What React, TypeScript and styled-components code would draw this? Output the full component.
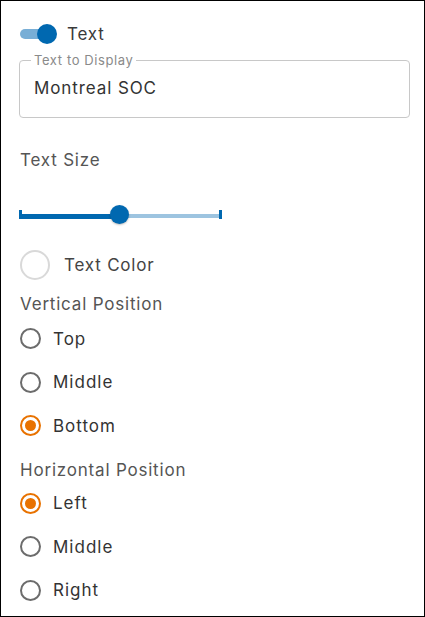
import styled, { createGlobalStyle } from "styled-components";

const GlobalStyle = createGlobalStyle`
  html, body {
    margin: 0;
    padding: 0;
    background: #fff;
  }
  body {
    font-family: Inter, "Open Sans", "Liberation Sans", sans-serif;
    letter-spacing: 0.8px;
  }
`;

const Panel = styled.div`
  box-sizing: border-box;
  width: 425px;
  height: 617px;
  border: 1px solid #000;
  padding: 0 14px 0 18px;
  display: flex;
  flex-direction: column;
  color: #333;
  overflow: hidden;
`;

const ToggleRow = styled.label`
  display: flex;
  align-items: center;
  gap: 11px;
  height: 20px;
  margin-top: 23px;
  margin-left: 1px;
  font-size: 17px;
  color: #3a3a3a;
`;

const ToggleTrack = styled.span`
  position: relative;
  display: inline-block;
  width: 36px;
  height: 10px;
  border-radius: 5px;
  background: #78aed6;
`;

const ToggleThumb = styled.span`
  position: absolute;
  top: -5px;
  right: -1px;
  width: 20px;
  height: 20px;
  border-radius: 50%;
  background: #0068b0;
`;

const Field = styled.fieldset`
  box-sizing: border-box;
  margin: 9px 0 0 0;
  padding: 0 14px;
  height: 65px;
  border: 1px solid #c8c8c8;
  border-radius: 4px;
  min-width: 0;
`;

const Legend = styled.legend`
  padding: 0 3px;
  margin-left: -3px;
  font-size: 13px;
  line-height: 14px;
  letter-spacing: 0.6px;
  color: #8a8a8a;
`;

const ValueInput = styled.input`
  box-sizing: border-box;
  width: 100%;
  height: 42px;
  border: none;
  outline: none;
  padding: 0;
  margin: 0;
  font-family: inherit;
  letter-spacing: 0.9px;
  font-size: 17px;
  color: #333;
  background: transparent;
`;

const SectionLabel = styled.div<{ $top: number }>`
  margin-top: ${({ $top }) => $top}px;
  line-height: 20px;
  height: 20px;
  font-size: 17px;
  color: #555;
  padding-left: 1px;
`;

const Slider = styled.div`
  position: relative;
  display: flex;
  align-items: center;
  width: 203px;
  height: 20px;
  margin-top: 34px;
`;

const Rail = styled.div`
  display: flex;
  align-items: flex-end;
  width: 100%;
  height: 9px;
`;

const Tick = styled.span`
  width: 3px;
  height: 9px;
  background: #0068b0;
`;

const TrackFill = styled.span`
  height: 5px;
  background: #0068b0;
`;

const TrackRest = styled.span`
  flex: 1;
  height: 4px;
  margin-bottom: 1px;
  background: #9dc4e0;
`;

const SliderThumb = styled.span`
  position: absolute;
  top: 1px;
  width: 19px;
  height: 19px;
  margin-left: -9px;
  border-radius: 50%;
  background: #0068b0;
  box-shadow: 0 1px 2px rgba(0, 0, 0, 0.25);
`;

const ColorRow = styled.div`
  display: flex;
  align-items: center;
  gap: 14px;
  margin-top: 26px;
  margin-left: 1px;
  height: 30px;
  font-size: 17px;
  color: #444;
`;

const Swatch = styled.span`
  box-sizing: border-box;
  width: 30px;
  height: 30px;
  border-radius: 50%;
  border: 2px solid #d9d9d9;
  background: #fff;
`;

const RadioList = styled.div<{ $top: number }>`
  display: flex;
  flex-direction: column;
  margin-top: ${({ $top }) => $top}px;
`;

const RadioRow = styled.label`
  display: flex;
  align-items: center;
  gap: 12px;
  height: 43.5px;
  margin-left: 1px;
  font-size: 17px;
  letter-spacing: 1px;
  color: #333;
`;

const RadioDot = styled.span<{ $checked: boolean }>`
  box-sizing: border-box;
  display: flex;
  align-items: center;
  justify-content: center;
  width: 21px;
  height: 21px;
  border-radius: 50%;
  border: 2px solid ${({ $checked }) => ($checked ? "#e87200" : "#6c6c6c")};

  &::after {
    content: "";
    display: ${({ $checked }) => ($checked ? "block" : "none")};
    width: 11px;
    height: 11px;
    border-radius: 50%;
    background: #e87200;
  }
`;

function RadioGroup({
  options,
  selected,
  top,
}: {
  options: string[];
  selected: string;
  top: number;
}) {
  return (
    <RadioList $top={top}>
      {options.map((o) => (
        <RadioRow key={o}>
          <RadioDot $checked={o === selected} />
          <span>{o}</span>
        </RadioRow>
      ))}
    </RadioList>
  );
}

export default function App() {
  const sizePct = 49.5;
  return (
    <>
      <GlobalStyle />
      <Panel>
        <ToggleRow>
          <ToggleTrack>
            <ToggleThumb />
          </ToggleTrack>
          <span>Text</span>
        </ToggleRow>

        <Field>
          <Legend>Text to Display</Legend>
          <ValueInput defaultValue="Montreal SOC" />
        </Field>

        <SectionLabel $top={32}>Text Size</SectionLabel>

        <Slider>
          <Rail>
            <Tick />
            <TrackFill style={{ width: `${sizePct}%` }} />
            <TrackRest />
            <Tick />
          </Rail>
          <SliderThumb style={{ left: `${sizePct}%` }} />
        </Slider>

        <ColorRow>
          <Swatch />
          <span>Text Color</span>
        </ColorRow>

        <SectionLabel $top={14}>Vertical Position</SectionLabel>
        <RadioGroup options={["Top", "Middle", "Bottom"]} selected="Bottom" top={3} />

        <SectionLabel $top={12}>Horizontal Position</SectionLabel>
        <RadioGroup options={["Left", "Middle", "Right"]} selected="Left" top={2} />
      </Panel>
    </>
  );
}
